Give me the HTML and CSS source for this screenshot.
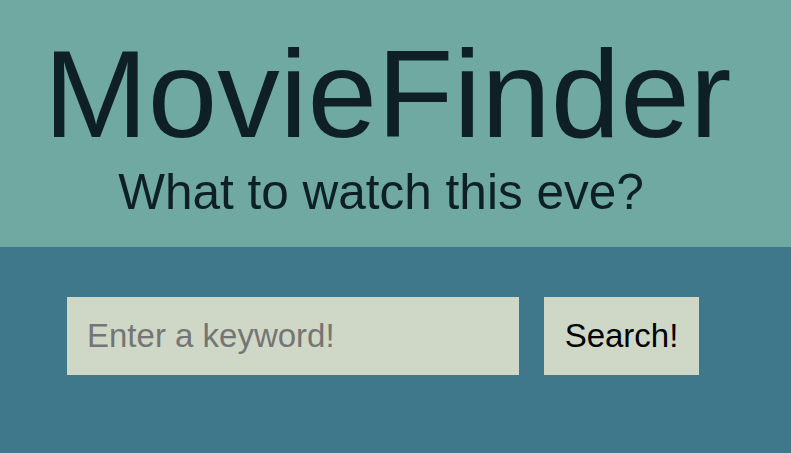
FILE: index.html
```html
<!DOCTYPE html>
<html lang="en">
<head>
<meta charset="utf-8">
<title>MovieFinder</title>
<link rel="stylesheet" href="styles.css">
</head>
<body>
  <header class="hero">
    <h1 class="title">MovieFinder</h1>
    <p class="subtitle">What to watch this eve?</p>
  </header>
  <main class="search">
    <form class="search-form">
      <input class="search-input" type="text" placeholder="Enter a keyword!">
      <button class="search-button" type="button">Search!</button>
    </form>
  </main>
</body>
</html>
```
FILE: styles.css
```css
html, body {
  margin: 0;
  padding: 0;
  height: 100%;
}
body {
  background: #3e788a;
  font-family: "Liberation Sans", Arial, sans-serif;
  color: #0e1f26;
}
.hero {
  background: #6fa9a1;
  padding: 30px 0;
  text-align: center;
}
.title {
  margin: 0;
  font-size: 125px;
  font-weight: 400;
  line-height: 128px;
  padding-right: 16px;
}
.subtitle {
  margin: 9px 0 0;
  font-size: 49.5px;
  line-height: 50px;
  padding-right: 29px;
}
.search {
  padding: 50px 0 0 67px;
}
.search-form {
  display: flex;
  gap: 25px;
  margin: 0;
}
.search-input,
.search-button {
  height: 78px;
  box-sizing: border-box;
  border: none;
  background: #cfd8c6;
  font-family: "Liberation Sans", Arial, sans-serif;
  font-size: 33px;
  margin: 0;
  outline: none;
  border-radius: 0;
}
.search-input {
  width: 452px;
  padding: 0 20px;
  color: #000;
}
.search-input::placeholder {
  color: #757575;
}
.search-button {
  width: 155px;
  padding: 0;
  color: #000;
  text-align: center;
  cursor: pointer;
}
```
